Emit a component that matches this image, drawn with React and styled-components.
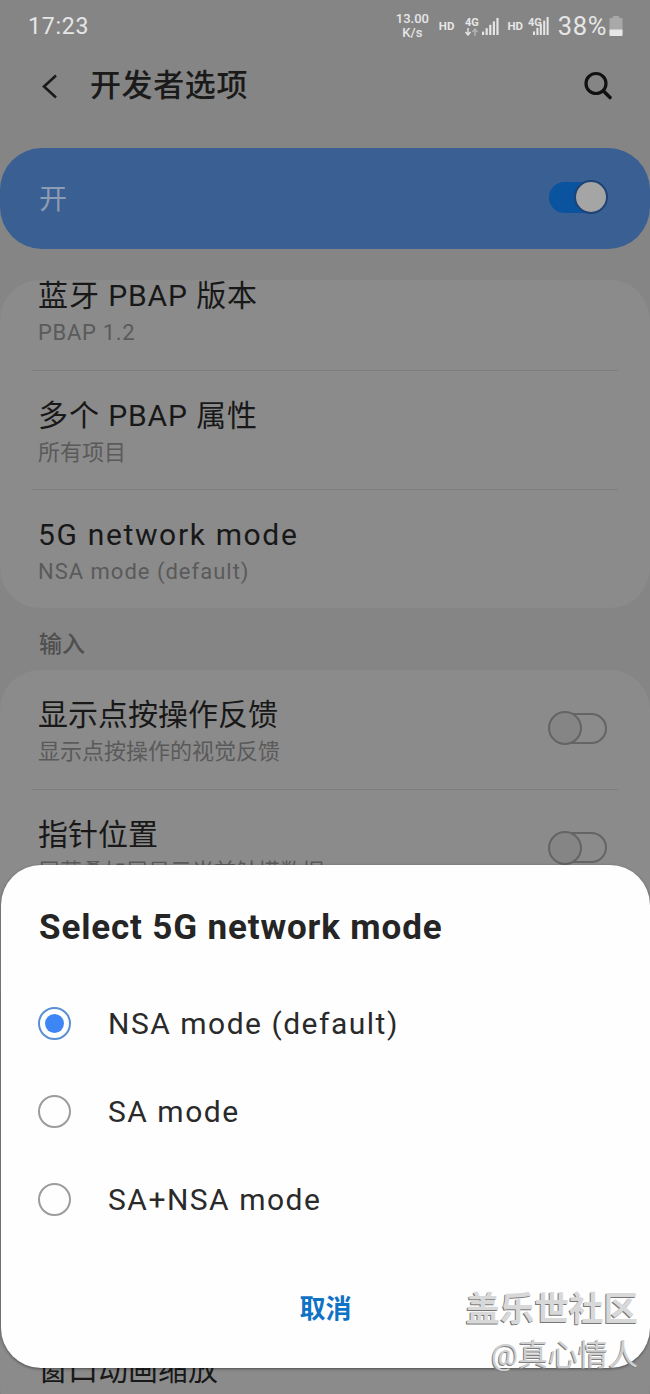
import React from "react";
import styled, { createGlobalStyle } from "styled-components";

const FONT = `Roboto, "Noto Sans CJK SC", sans-serif`;

const Global = createGlobalStyle`
  html, body { margin: 0; padding: 0; background: #858585; }
  * { box-sizing: border-box; }
`;

const Page = styled.div`
  position: relative;
  width: 650px;
  height: 1394px;
  overflow: hidden;
  background: #858585;
  font-family: ${FONT};
`;

const StatusBar = styled.div`
  height: 50px;
  padding: 12px 27px 0 28px;
  display: flex;
  justify-content: space-between;
  align-items: flex-start;
  color: #e6e6e6;
`;
const Clock = styled.div`
  font-size: 23px;
  line-height: 28px;
  letter-spacing: 0.8px;
  padding-top: 1px;
`;
const StatusIcons = styled.div`
  display: flex;
  align-items: center;
  height: 28px;
`;
const Speed = styled.div`
  width: 37px;
  margin-right: 8px;
  margin-top: -1px;
  font-size: 13px;
  line-height: 14px;
  font-weight: 500;
  text-align: center;
`;
const Hd = styled.span`
  font-size: 11.5px;
  font-weight: 700;
  margin-right: ${(p) => p.$gap}px;
`;
const SecondHd = styled(Hd)`
  margin-left: 7px;
`;
const Net = styled.div`
  display: flex;
  flex-direction: column;
  align-items: center;
  font-size: 11px;
  line-height: 11px;
  font-weight: 700;
  margin-right: ${(p) => p.$gap}px;
  margin-top: ${(p) => p.$lift || 0}px;
`;
const Percent = styled.span`
  font-size: 25.5px;
  margin: 0 2px 0 8px;
  letter-spacing: 0.6px;
`;

const Header = styled.div`
  height: 98px;
  padding: 16px 37px 0 40px;
  display: flex;
  align-items: flex-start;
  color: #161616;
`;
const Back = styled.svg`
  width: 20px;
  height: 40px;
  margin-right: 30px;
`;
const Title = styled.div`
  flex: 1;
  font-size: 31px;
  line-height: 40px;
  letter-spacing: 0.6px;
  font-weight: 500;
  color: #1a1a1a;
`;
const Search = styled.svg`
  width: 32px;
  height: 40px;
`;

const MainSwitch = styled.div`
  height: 101px;
  margin-bottom: 31px;
  padding: 0 43px 0 39px;
  border-radius: 42px;
  background: #3a5f93;
  display: flex;
  align-items: center;
  justify-content: space-between;
  color: #8d9cb3;
  font-size: 28px;
`;
const SwitchLabel = styled.span`
  padding-bottom: 3px;
`;
const ToggleTrack = styled.div`
  position: relative;
  width: 58px;
  height: 31px;
  border-radius: 16px;
  margin-top: -3px;
  background: ${(p) => (p.$on ? "#0a539f" : "transparent")};
  border: ${(p) => (p.$on ? "none" : "2px solid #646464")};
`;
const ToggleKnob = styled.div`
  position: absolute;
  width: 34px;
  height: 34px;
  border-radius: 50%;
  top: ${(p) => (p.$on ? "-1.5px" : "-3.5px")};
  ${(p) => (p.$on ? "right: -1px;" : "left: -3px;")}
  background: ${(p) => (p.$on ? "#a5a5a5" : "#858585")};
  border: 2px solid ${(p) => (p.$on ? "#1e4374" : "#646464")};
`;

const Card = styled.div`
  display: flex;
  flex-direction: column;
  margin-bottom: ${(p) => p.$mb || 0}px;
  height: ${(p) => p.$h}px;
  border-radius: 40px;
  background: #8b8b8b;
`;
const Row = styled.div`
  flex: none;
  margin: 0 32px;
  padding: 0 11px 0 6px;
  height: 120px;
  display: flex;
  align-items: center;
  justify-content: space-between;
  border-bottom: ${(p) => (p.$last ? "none" : "1px solid #7e7e7e")};
  ${(p) => (p.$clipped ? "margin-top: -29px;" : "")}
  & + & {
    height: 119px;
  }
`;
const RowText = styled.div`
  display: flex;
  flex-direction: column;
  gap: 3px;
  padding-top: 8px;
`;
const RowTitle = styled.div`
  font-size: 30px;
  line-height: 34px;
  letter-spacing: ${(p) => p.$spacing || 0}px;
  color: #181818;
`;
const RowSub = styled.div`
  font-size: 22px;
  line-height: 34px;
  letter-spacing: ${(p) => p.$spacing || 0}px;
  color: #5a5a5a;
`;
const SectionLabel = styled.div`
  height: 62px;
  padding: 22px 0 0 39px;
  font-size: 23px;
  line-height: 30px;
  font-weight: 500;
  color: #4f4f4f;
`;

const Dialog = styled.div`
  position: absolute;
  left: 1px;
  right: 0;
  top: 865px;
  height: 503px;
  border-radius: 40px;
  background: #fefefe;
  box-shadow: 0 1px 3px rgba(0, 0, 0, 0.45);
  padding: 41px 38px 0 38px;
  display: flex;
  flex-direction: column;
`;
const DialogTitle = styled.div`
  font-size: 35px;
  line-height: 44px;
  font-weight: 700;
  color: #252525;
  letter-spacing: 0.85px;
  margin-bottom: 29px;
`;
const Option = styled.div`
  height: 88px;
  display: flex;
  align-items: center;
  gap: 37px;
  font-size: 30px;
  letter-spacing: 1.5px;
  color: #2a2a2a;
`;
const Radio = styled.div`
  width: 33px;
  height: 33px;
  flex: none;
  margin-left: -1px;
  border-radius: 50%;
  display: flex;
  align-items: center;
  justify-content: center;
  border: 2px solid ${(p) => (p.$on ? "#5a8fd6" : "#9c9c9c")};
  &::after {
    content: "";
    display: ${(p) => (p.$on ? "block" : "none")};
    width: 19px;
    height: 19px;
    border-radius: 50%;
    background: #3e86f5;
  }
`;
const Actions = styled.div`
  display: flex;
  justify-content: center;
  margin-top: 48px;
`;
const Cancel = styled.div`
  font-size: 26px;
  line-height: 36px;
  font-weight: 700;
  color: #0f72c4;
`;

const Watermark = styled.div`
  position: absolute;
  right: 12px;
  top: 1288px;
  display: flex;
  flex-direction: column;
  align-items: flex-end;
`;
const WmBrand = styled.div`
  font-size: 34.5px;
  line-height: 42px;
  font-weight: 700;
  color: #d8d8d8;
  text-shadow: -1px 1px 0 #777;
`;
const WmUser = styled.div`
  font-size: 30px;
  line-height: 36px;
  margin-top: 7px;
  color: #cfcfcf;
  text-shadow: -1px 1px 0 #808080;
`;

function Bars({ w = 18, h = 18, count = 5, color = "#e6e6e6" }) {
  const step = w / count;
  return (
    <svg width={w} height={h} viewBox={`0 0 ${w} ${h}`}>
      {Array.from({ length: count }, (_, i) => {
        const bh = (h * (i + 1)) / count;
        return <rect key={i} x={i * step} y={h - bh} width={step * 0.6} height={bh} fill={color} />;
      })}
    </svg>
  );
}

function Toggle({ on }) {
  return (
    <ToggleTrack $on={on}>
      <ToggleKnob $on={on} />
    </ToggleTrack>
  );
}

export default function App() {
  return (
    <Page>
      <Global />
      <StatusBar>
        <Clock>17:23</Clock>
        <StatusIcons>
          <Speed>13.00<br />K/s</Speed>
          <Hd $gap={10}>HD</Hd>
          <Net $gap={3}>
            4G
            <svg width="15" height="8" viewBox="0 0 14 8">
              <path d="M3.500 0v6M1 4l2.500 3L6 4" stroke="#e6e6e6" strokeWidth="1.4" fill="none" />
              <path d="M10.500 8V2M8 4l2.500-3L13 4" stroke="#b5b5b5" strokeWidth="1.4" fill="none" />
            </svg>
          </Net>
          <Bars w={18} h={17} />
          <SecondHd $gap={5}>HD</SecondHd>
          <Net $gap={-9} $lift={-8}>4G</Net>
          <Bars w={17} h={18} />
          <Percent>38%</Percent>
          <svg width="14" height="20" viewBox="0 0 13 20">
            <path d="M3.500 0h6v2H12a1 1 0 0 1 1 1v16a1 1 0 0 1-1 1H1a1 1 0 0 1-1-1V3a1 1 0 0 1 1-1h2.500z" fill="#a8a8a8" />
            <path d="M0 13.500h13V19a1 1 0 0 1-1 1H1a1 1 0 0 1-1-1z" fill="#e6e6e6" />
          </svg>
        </StatusIcons>
      </StatusBar>

      <Header>
        <Back viewBox="0 0 20 40">
          <path d="M16 9.500 4 20.500 16 31.500" stroke="#1a1a1a" strokeWidth="2.600" fill="none" />
        </Back>
        <Title>开发者选项</Title>
        <Search viewBox="0 0 32 40">
          <circle cx="15" cy="17.500" r="10" stroke="#111" strokeWidth="3.200" fill="none" />
          <path d="M22.500 25 29 31.500" stroke="#111" strokeWidth="3.600" strokeLinecap="round" />
        </Search>
      </Header>

      <MainSwitch>
        <SwitchLabel>开</SwitchLabel>
        <Toggle on />
      </MainSwitch>

      <Card $h={328}>
        <Row $clipped>
          <RowText>
            <RowTitle $spacing={0.9}>蓝牙 PBAP 版本</RowTitle>
            <RowSub $spacing={0.7}>PBAP 1.2</RowSub>
          </RowText>
        </Row>
        <Row>
          <RowText>
            <RowTitle $spacing={0.9}>多个 PBAP 属性</RowTitle>
            <RowSub>所有项目</RowSub>
          </RowText>
        </Row>
        <Row $last>
          <RowText>
            <RowTitle $spacing={1.65}>5G network mode</RowTitle>
            <RowSub $spacing={1}>NSA mode (default)</RowSub>
          </RowText>
        </Row>
      </Card>

      <SectionLabel>输入</SectionLabel>

      <Card $h={360} $mb={276}>
        <Row>
          <RowText>
            <RowTitle>显示点按操作反馈</RowTitle>
            <RowSub>显示点按操作的视觉反馈</RowSub>
          </RowText>
          <Toggle />
        </Row>
        <Row>
          <RowText>
            <RowTitle>指针位置</RowTitle>
            <RowSub>屏幕叠加层显示当前触摸数据</RowSub>
          </RowText>
          <Toggle />
        </Row>
      </Card>

      <Card $h={119}>
        <Row $last>
          <RowText>
            <RowTitle>窗口动画缩放</RowTitle>
          </RowText>
        </Row>
      </Card>

      <Dialog>
        <DialogTitle>Select 5G network mode</DialogTitle>
        <Option>
          <Radio $on />
          NSA mode (default)
        </Option>
        <Option>
          <Radio />
          SA mode
        </Option>
        <Option>
          <Radio />
          SA+NSA mode
        </Option>
        <Actions>
          <Cancel>取消</Cancel>
        </Actions>
      </Dialog>

      <Watermark>
        <WmBrand>盖乐世社区</WmBrand>
        <WmUser>@真心情人</WmUser>
      </Watermark>
    </Page>
  );
}
